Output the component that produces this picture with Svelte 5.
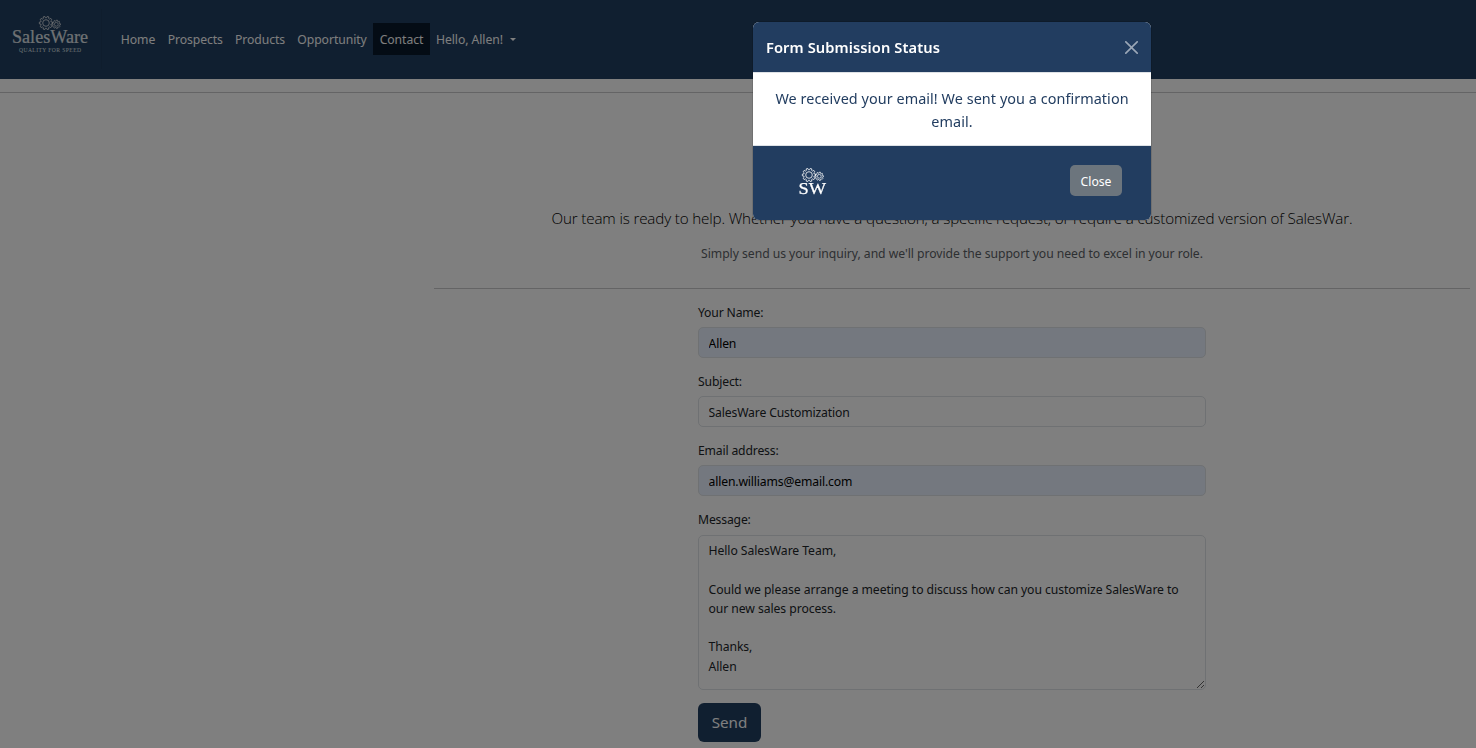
<script>
  const links = [
    { label: 'Home', width: 47 },
    { label: 'Prospects', width: 67.5 },
    { label: 'Products', width: 62 },
    { label: 'Opportunity', width: 82 },
    { label: 'Contact', width: 57, active: true },
  ];
  const fields = [
    { id: 'name', label: 'Your Name:', value: 'Allen', filled: true },
    { id: 'subject', label: 'Subject:', value: 'SalesWare Customization', filled: false },
    { id: 'email', label: 'Email address:', value: 'allen.williams@email.com', filled: true },
  ];
  const message = `Hello SalesWare Team,

Could we please arrange a meeting to discuss how can you customize SalesWare to
our new sales process.

Thanks,
Allen`;
  function gear(cx, cy, r, teeth, depth) {
    const pts = [];
    const step = (Math.PI * 2) / teeth;
    for (let i = 0; i < teeth; i++) {
      const a = i * step;
      for (const [o, rad] of [[-0.32, r - depth], [-0.2, r], [0.2, r], [0.32, r - depth]]) {
        pts.push(`${(cx + Math.cos(a + o * step) * rad).toFixed(2)} ${(cy + Math.sin(a + o * step) * rad).toFixed(2)}`);
      }
    }
    return `M${pts.join('L')}Z`;
  }
</script>

{#snippet gears(x, y)}
  <g transform="translate({x} {y})" fill="none" stroke="currentColor" stroke-width="0.8">
    <path d={gear(7, 7, 6.7, 10, 1.4)} />
    <circle cx="7" cy="7" r="3.3" />
    <path d={gear(17.3, 8.3, 4.2, 9, 1)} stroke-width="0.7" />
    <circle cx="17.3" cy="8.3" r="1.9" stroke-width="0.7" />
  </g>
{/snippet}

<div class="page">
  <nav>
    <svg class="brand" width="102" height="79" viewBox="0 0 102 79" role="img" aria-label="SalesWare">
      {@render gears(39, 16)}
      <text class="word" x="12" y="43" textLength="76" lengthAdjust="spacingAndGlyphs">SalesWare</text>
      <text class="tag" x="19" y="52.3" textLength="62">QUALITY FOR SPEED</text>
      <path d="M101.5 9V69" stroke="#1e3b5b" />
    </svg>
    <ul>
      {#each links as l}
        <li class:active={l.active} style="width:{l.width}px">{l.label}</li>
      {/each}
      <li class="user">Hello, Allen! <i class="caret"></i></li>
    </ul>
  </nav>
  <hr class="top" />
  <main>
    <header>
      <p class="lead">Our team is ready to help. Whether you have a question, a specific request, or require a customized version of SalesWar.</p>
      <p class="sub">Simply send us your inquiry, and we'll provide the support you need to excel in your role.</p>
    </header>
    <hr />
    <form>
      {#each fields as f}
        <label for={f.id}>{f.label}</label>
        <input id={f.id} class:filled={f.filled} value={f.value} />
      {/each}
      <label for="message">Message:</label>
      <textarea id="message" value={message} spellcheck="false"></textarea>
      <button type="button" class="send">Send</button>
    </form>
  </main>
</div>

<div class="backdrop"></div>
<section class="modal" role="dialog">
  <div class="head">
    <h5>Form Submission Status</h5>
    <svg width="13" height="13" viewBox="0 0 16 16" fill="#fff" opacity="0.55">
      <path d="M.293.293a1 1 0 0 1 1.414 0L8 6.586 14.293.293a1 1 0 1 1 1.414 1.414L9.414 8l6.293 6.293a1 1 0 0 1-1.414 1.414L8 9.414l-6.293 6.293a1 1 0 0 1-1.414-1.414L6.586 8 .293 1.707a1 1 0 0 1 0-1.414z" />
    </svg>
  </div>
  <div class="body">
    <span>We received your email! We sent you a confirmation</span>
    <span>email.</span>
  </div>
  <div class="foot">
    <svg class="mark" width="30" height="30" viewBox="0 0 30 30" role="img" aria-label="SW">
      {@render gears(4, 1)}
      <text class="sw" x="0.5" y="26.5" textLength="27.5" lengthAdjust="spacingAndGlyphs">SW</text>
    </svg>
    <button type="button" class="close">Close</button>
  </div>
</section>

<style>
  :global(body) { margin: 0; overflow: hidden; background: #fff; }
  .page, .modal, .page input, .page textarea, button { font-family: "Noto Sans", "Open Sans", sans-serif; }
  .page, .page *, .modal, .modal * { box-sizing: border-box; }
  .page { height: 748px; overflow: hidden; color: #212529; font-size: 12.2px; line-height: 19.2px; }
  nav { display: flex; height: 79px; background: #203e60; color: #fff; }
  .brand { flex: none; margin-right: 12.5px; color: #e4e6e9; }
  .brand text { fill: #dfe2e6; font-family: "Liberation Serif", serif; }
  .word { font-size: 19px; }
  .brand .word { stroke: #dfe2e6; stroke-width: 0.2px; }
  .tag { font-size: 5.6px; }
  ul { display: flex; margin: 23px 0 0; padding: 0; list-style: none; height: 32px; }
  li { padding-top: 1px; text-align: center; line-height: 32px; height: 32px; white-space: nowrap; color: #fcfcfc; letter-spacing: -0.07px; }
  li.active { background: #08182a; }
  li.user { padding-left: 6px; }
  .caret { display: inline-block; margin-left: 4.5px; vertical-align: 3px; border: 3px solid transparent; border-top-color: #fff; border-bottom: 0; }
  hr { height: 1px; margin: 0; border: 0; background: #c8c9ca; }
  hr.top { margin-top: 13px; }
  main { margin-left: 434px; width: 1036px; }
  header { height: 195px; padding-top: 113px; text-align: center; }
  p { margin: 0; white-space: nowrap; }
  .lead { font-family: "Open Sans", "Noto Sans", sans-serif; font-size: 15.2px; font-weight: 300; line-height: 24px; letter-spacing: -0.15px; color: #000; }
  .sub { margin-top: 14px; line-height: 20px; letter-spacing: -0.045px; color: #5b6065; }
  form { display: flex; flex-direction: column; align-items: flex-start; width: 508px; margin: 0 auto; padding-top: 13.15px; }
  label { height: 19.2px; margin-bottom: 6px; padding-top: 1px; letter-spacing: -0.17px; }
  input, textarea { width: 508px; border: 1px solid #dee2e6; border-radius: 5px; padding: 6px 9.5px 4px; background: #fff; color: #212529; font-size: 12.2px; line-height: 19.2px; outline: 0; letter-spacing: -0.07px; }
  input { height: 30.8px; margin-bottom: 13.1px; letter-spacing: -0.15px; }
  input.filled { background: #e8f0fe; color: #000; }
  textarea { display: block; height: 155px; padding-top: 5.8px; resize: vertical; }
  .send { width: 63px; height: 39px; margin-top: 13px; border: 0; border-radius: 6px; padding: 0; background: #203e60; color: #fff; font-size: 15.2px; }
  .backdrop { position: fixed; inset: 0; background: rgba(0, 0, 0, 0.5); }
  .modal { position: fixed; left: 753px; top: 22px; width: 398px; height: 198px; border-radius: 6px; overflow: hidden; background: #fff; box-shadow: 0 0 0 1px rgba(0, 0, 0, 0.12); }
  .head { display: flex; align-items: center; justify-content: space-between; height: 51px; padding: 1px 13px 0; background: #223d60; border-bottom: 1px solid #dee2e6; color: #fff; }
  h5 { margin: 0 0 2px; font-size: 14.7px; font-weight: 600; line-height: 24px; letter-spacing: 0.08px; white-space: nowrap; }
  .body { display: flex; flex-direction: column; align-items: center; height: 73px; padding-top: 14px; color: #223d60; font-size: 14.4px; line-height: 23px; letter-spacing: 0.06px; white-space: nowrap; border-bottom: 1px solid #dee2e6; }
  .foot { display: flex; align-items: center; justify-content: space-between; height: 74px; padding: 0 29px 5px 45px; background: #223d60; }
  .mark { color: #fff; margin-top: 2px; }
  .sw { fill: #fff; font: 17.5px "Liberation Serif", serif; stroke: #fff; stroke-width: 0.25px; }
  .close { width: 52px; height: 31px; border: 0; border-radius: 5px; padding: 1px 0 0; background: #6c757d; color: #fff; font-size: 12.2px; }
</style>
